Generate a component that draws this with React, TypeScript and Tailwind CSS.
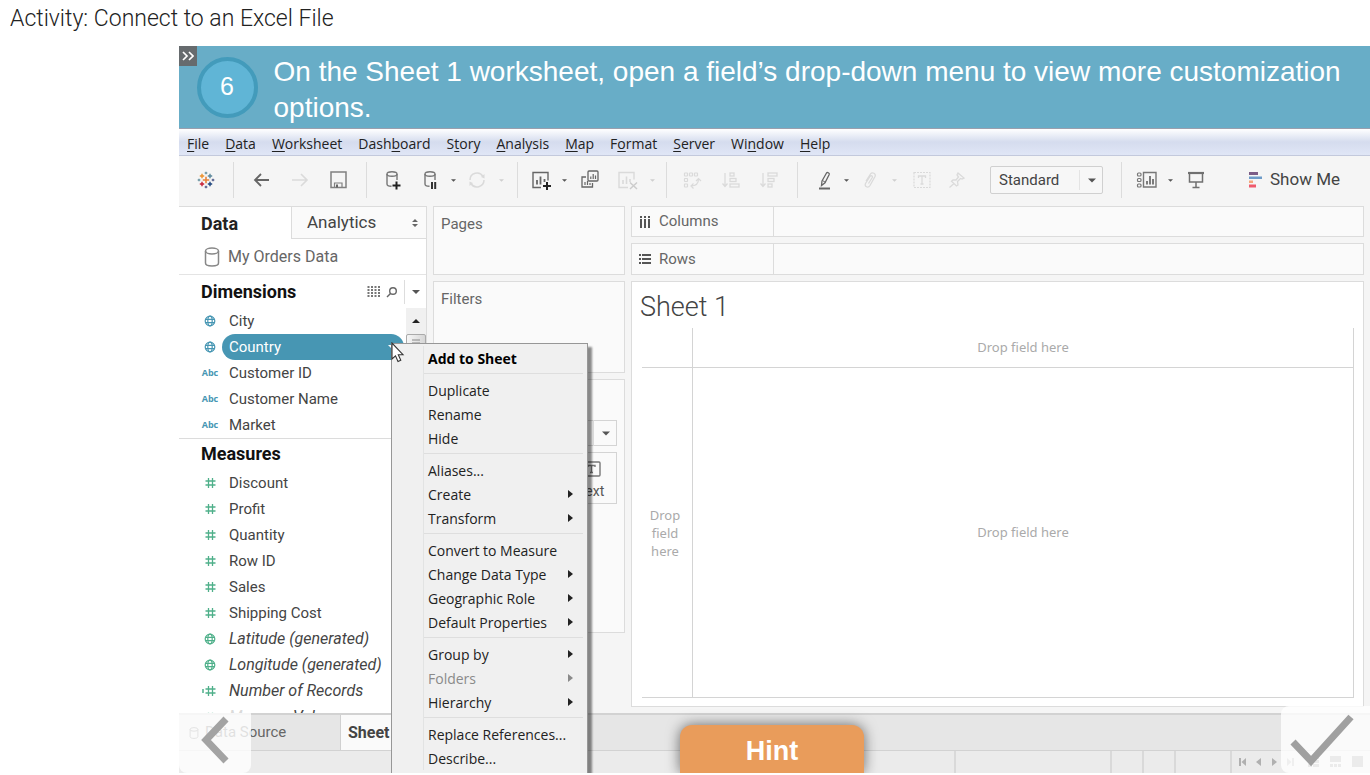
import React from "react";

type IconName =
  | "logo" | "back" | "forward" | "save" | "dbPlus" | "dbPause" | "refresh" | "chartPlus"
  | "duplicate" | "clear" | "swap" | "sortAsc" | "sortDesc" | "pen" | "clip" | "label" | "pin"
  | "cards" | "present";

const DARK = "#666";
const PALE = "#dadada";

function Plus({ x, y, s, c }: { x: number; y: number; s: number; c: string }) {
  return <path d={`M${x - s} ${y}H${x + s}M${x} ${y - s}V${y + s}`} stroke={c} strokeWidth={s > 2.5 ? 1.6 : 1.4} />;
}

const drawings: Record<IconName, React.ReactNode> = {
  logo: (
    <g>
      <Plus x={13} y={12} s={3.2} c="#e8833a" />
      <Plus x={9} y={8} s={2.2} c="#eb912c" />
      <Plus x={17} y={8} s={2.2} c="#5b879b" />
      <Plus x={9} y={16} s={2.2} c="#c72035" />
      <Plus x={17} y={16} s={2.2} c="#1f457e" />
      <Plus x={13} y={5} s={1.3} c="#7199a6" />
      <Plus x={13} y={19} s={1.3} c="#5b6591" />
      <Plus x={6} y={12} s={1.3} c="#7199a6" />
      <Plus x={20} y={12} s={1.3} c="#5b6591" />
    </g>
  ),
  back: <path d="M19 12H5M11 6L5 12L11 18" stroke={DARK} strokeWidth="1.8" />,
  forward: <path d="M4 12H18.500M13 6L19 12L13 18" stroke={PALE} strokeWidth="1.6" />,
  save: (
    <g>
      <path d="M5 4H20V19.500H5Z" stroke="#808080" strokeWidth="1.5" />
      <path d="M8.500 19V15H16V19" stroke="#808080" strokeWidth="1.2" />
      <path d="M10 16.500H12V19.500H10Z" fill={DARK} />
    </g>
  ),
  dbPlus: (
    <g>
      <ellipse cx="11" cy="6" rx="5" ry="2.200" stroke="#777" strokeWidth="1.400" />
      <path d="M6 6V16C6 17.500 8 18.300 10.500 18.300M16 6V12" stroke="#777" strokeWidth="1.400" />
      <path d="M11.500 17.500H19.500M15.500 13.500V21.500" stroke="#222" strokeWidth="2" />
    </g>
  ),
  dbPause: (
    <g>
      <ellipse cx="11" cy="6" rx="5" ry="2.200" stroke="#777" strokeWidth="1.400" />
      <path d="M6 6V16C6 17.500 8 18.300 10.500 18.300M16 6V12" stroke="#777" strokeWidth="1.400" />
      <path d="M13 14V21M16.200 14V21" stroke="#333" strokeWidth="2" />
    </g>
  ),
  refresh: (
    <g>
      <path d="M5 12A7 7 0 0 1 18 8.500M19 12A7 7 0 0 1 6 15.500" stroke={PALE} strokeWidth="1.500" />
      <path d="M16 9L19.500 6V10.500ZM8 15L4.500 18V13.500Z" fill={PALE} />
    </g>
  ),
  chartPlus: (
    <g>
      <path d="M11 19.500H3V4.500H18V12.500" stroke={DARK} strokeWidth="1.400" />
      <path d="M7 16.500V12M10.500 16.500V8.500M14.500 14V11" stroke={DARK} strokeWidth="1.800" />
      <path d="M13 18H21M17 14V22" stroke="#222" strokeWidth="2" />
    </g>
  ),
  duplicate: (
    <g>
      <rect x="10" y="3" width="10" height="10" rx="1" stroke={DARK} strokeWidth="1.300" />
      <path d="M12.800 11V8.500M15.200 11V6M17.500 11V7.500" stroke={DARK} strokeWidth="1.200" />
      <path d="M8 9H4V19H14.500V15" stroke={DARK} strokeWidth="1.300" />
      <path d="M7 17V14M9.500 17V13M12 17V15" stroke={DARK} strokeWidth="1.200" />
    </g>
  ),
  clear: (
    <g>
      <path d="M12 19.500H3V4.500H18V11.500" stroke={PALE} strokeWidth="1.400" />
      <path d="M7 16V12M10.500 16V8.500M14 14V11" stroke={PALE} strokeWidth="1.600" />
      <path d="M14 14.500L21 21M21 14.500L14 21" stroke="#ccc" strokeWidth="1.500" />
    </g>
  ),
  swap: (
    <g stroke={PALE} strokeWidth="1.200">
      <rect x="3.500" y="5" width="3" height="3" rx="0.500" /><rect x="8.500" y="5" width="3" height="3" rx="0.500" /><rect x="13.500" y="5" width="3" height="3" rx="0.500" />
      <rect x="3.500" y="10.500" width="3" height="3" rx="0.500" /><rect x="3.500" y="16" width="3" height="3" rx="0.500" />
      <path d="M17.500 11C17.500 15 15 18 10 18M15 13L17.500 10.500L20 13M12.500 15.500L10 18L12.500 20.500" />
    </g>
  ),
  sortAsc: (
    <g stroke={PALE} strokeWidth="1.300">
      <path d="M6 5V18M3.500 15.500L6 18.500L8.500 15.500" />
      <rect x="11" y="5" width="4" height="3" /><rect x="11" y="10.500" width="6" height="3" /><rect x="11" y="16" width="9" height="3" />
    </g>
  ),
  sortDesc: (
    <g stroke={PALE} strokeWidth="1.300">
      <path d="M6 5V18M3.500 15.500L6 18.500L8.500 15.500" />
      <rect x="11" y="5" width="9" height="3" /><rect x="11" y="10.500" width="6" height="3" /><rect x="11" y="16" width="4" height="3" />
    </g>
  ),
  pen: (
    <g>
      <path d="M10 13L14.500 5C15.200 3.800 17.800 5 17.200 6.500L13 14.800L9.500 17.500Z" stroke={DARK} strokeWidth="1.300" />
      <path d="M10.500 12.500L13.200 14.200" stroke={DARK} />
      <path d="M7 20.500H18" stroke={DARK} strokeWidth="2" />
    </g>
  ),
  clip: <path d="M8 13L12.500 6C14 3.600 18.500 5.500 17 8.500L12 17.500C10 20.500 6 18.500 7.500 15.500L12 8.500C13 7 15 8 14.300 9.500L10.500 15.500" stroke={PALE} strokeWidth="1.300" />,
  label: (
    <g>
      <rect x="4" y="4.500" width="16" height="15" stroke={PALE} strokeDasharray="2 1" strokeWidth="1.200" />
      <path d="M8.500 10V8H15.500V10M12 8V16M10.500 16H13.500" stroke={PALE} strokeWidth="1.300" />
    </g>
  ),
  pin: <path d="M14 5L20 10L18 11L16.500 10.500L13.500 13.500L14 17L12.500 18L7.500 13.300L9 12L12 12L14.500 9L13 7ZM10 15.500L5.500 19.500" stroke={PALE} strokeWidth="1.300" />,
  cards: (
    <g>
      <g stroke="#777" strokeWidth="1.200">
        <rect x="1.500" y="5" width="3.500" height="3" rx="1" /><rect x="1.500" y="10.500" width="3.500" height="3" rx="1" /><rect x="1.500" y="16" width="3.500" height="3" rx="1" />
        <path d="M7.500 4.500H20V19H7.500Z" strokeWidth="1.400" />
      </g>
      <path d="M11 16.500V13M14 16.500V8M17 16.500V11" stroke={DARK} strokeWidth="1.700" />
    </g>
  ),
  present: (
    <g stroke="#707070" strokeWidth="1.500">
      <path d="M4 5H20" strokeWidth="2.200" />
      <path d="M5.500 5.500V14H18.500V5.500M12 14V19M8.500 19.500H15.500" />
    </g>
  ),
};

type Tool =
  | { kind: "icon"; icon: IconName; label: string; ml: string }
  | { kind: "caret"; pale?: boolean; label: string; ml: string }
  | { kind: "sep"; ml: string };

const tools: Tool[] = [
  { kind: "icon", icon: "logo", label: "Start page", ml: "ml-3.5" },
  { kind: "sep", ml: "ml-4" },
  { kind: "icon", icon: "back", label: "Undo", ml: "ml-4" },
  { kind: "icon", icon: "forward", label: "Redo", ml: "ml-3.5" },
  { kind: "icon", icon: "save", label: "Save", ml: "ml-3.5" },
  { kind: "sep", ml: "ml-4" },
  { kind: "icon", icon: "dbPlus", label: "New data source", ml: "ml-3.5" },
  { kind: "icon", icon: "dbPause", label: "Pause updates", ml: "ml-3.5" },
  { kind: "caret", label: "Update options", ml: "ml-1" },
  { kind: "icon", icon: "refresh", label: "Refresh", ml: "ml-1.5" },
  { kind: "caret", pale: true, label: "Refresh options", ml: "ml-1.5" },
  { kind: "sep", ml: "ml-2.5" },
  { kind: "icon", icon: "chartPlus", label: "New worksheet", ml: "ml-3" },
  { kind: "caret", label: "New sheet options", ml: "ml-1" },
  { kind: "icon", icon: "duplicate", label: "Duplicate sheet", ml: "ml-2" },
  { kind: "icon", icon: "clear", label: "Clear sheet", ml: "ml-3.5" },
  { kind: "caret", pale: true, label: "Clear options", ml: "ml-1.5" },
  { kind: "sep", ml: "ml-2" },
  { kind: "icon", icon: "swap", label: "Swap rows and columns", ml: "ml-3.5" },
  { kind: "icon", icon: "sortAsc", label: "Sort ascending", ml: "ml-3.5" },
  { kind: "icon", icon: "sortDesc", label: "Sort descending", ml: "ml-3.5" },
  { kind: "sep", ml: "ml-4" },
  { kind: "icon", icon: "pen", label: "Highlight", ml: "ml-3.5" },
  { kind: "caret", label: "Highlight options", ml: "ml-1" },
  { kind: "icon", icon: "clip", label: "Group members", ml: "ml-1.5" },
  { kind: "caret", pale: true, label: "Group options", ml: "ml-1.5" },
  { kind: "icon", icon: "label", label: "Show mark labels", ml: "ml-2.5" },
  { kind: "icon", icon: "pin", label: "Fix axes", ml: "ml-2.5" },
];

const viewTools: Tool[] = [
  { kind: "sep", ml: "ml-4.5" },
  { kind: "icon", icon: "cards", label: "Show or hide cards", ml: "ml-3.5" },
  { kind: "caret", label: "Card options", ml: "ml-1" },
  { kind: "icon", icon: "present", label: "Presentation mode", ml: "ml-2" },
];

function Caret({ className }: { className: string }) {
  return (
    <svg viewBox="0 0 10 5" className={className} aria-hidden="true">
      <path d="M0 0H10L5 5Z" fill="currentColor" />
    </svg>
  );
}

function ToolItem({ tool }: { tool: Tool }) {
  if (tool.kind === "sep") return <span className={`${tool.ml} h-9 w-px shrink-0 bg-[#dcdcdc]`} />;
  if (tool.kind === "caret")
    return (
      <button type="button" aria-label={tool.label} className={`${tool.ml} flex h-6 w-3 shrink-0 items-center justify-center`}>
        <Caret className={tool.pale ? "h-[3px] w-[5px] text-[#cfcfcf]" : "h-[3px] w-[5px] text-[#555]"} />
      </button>
    );
  return (
    <button type="button" aria-label={tool.label} className={`${tool.ml} size-6 shrink-0`}>
      <svg viewBox="0 0 24 24" fill="none" className="size-6" aria-hidden="true">{drawings[tool.icon]}</svg>
    </button>
  );
}

const menuBar: [string, string, string][] = [
  ["", "F", "ile"], ["", "D", "ata"], ["", "W", "orksheet"], ["Dash", "b", "oard"], ["S", "t", "ory"],
  ["", "A", "nalysis"], ["", "M", "ap"], ["F", "o", "rmat"], ["", "S", "erver"], ["Wi", "n", "dow"], ["", "H", "elp"],
];

type FieldKind = "globe" | "abc" | "number" | "calc";

function FieldIcon({ kind, color }: { kind: FieldKind; color: string }) {
  if (kind === "abc") return <span className={`w-5 text-center font-['Open_Sans',sans-serif] text-[9px] font-bold ${color}`}>Abc</span>;
  if (kind === "globe")
    return (
      <svg viewBox="0 0 20 20" fill="none" stroke="currentColor" strokeWidth="1.200" className={`size-5 ${color}`} aria-hidden="true">
        <circle cx="10" cy="10" r="4.800" />
        <ellipse cx="10" cy="10" rx="2.200" ry="4.800" />
        <path d="M5.500 8.300H14.500M5.500 11.700H14.500" />
      </svg>
    );
  return (
    <svg viewBox="0 0 20 20" fill="none" stroke="currentColor" strokeWidth="1.300" className={`size-5 ${color}`} aria-hidden="true">
      <path d="M8.500 5V15M12.500 5V15M5.500 8H15.500M5.500 12H15.500" />
      {kind === "calc" && <path d="M2 9H4M2 11H4" />}
    </svg>
  );
}

const dimensions: [FieldKind, string][] = [
  ["globe", "City"], ["globe", "Country"], ["abc", "Customer ID"], ["abc", "Customer Name"], ["abc", "Market"],
];

const measures: [FieldKind, string, boolean][] = [
  ["number", "Discount", false], ["number", "Profit", false], ["number", "Quantity", false], ["number", "Row ID", false],
  ["number", "Sales", false], ["number", "Shipping Cost", false], ["globe", "Latitude (generated)", true],
  ["globe", "Longitude (generated)", true], ["calc", "Number of Records", true], ["number", "Measure Values", true],
];

const contextMenu: { label: string; sub?: boolean; off?: boolean; bold?: boolean }[][] = [
  [{ label: "Add to Sheet", bold: true }],
  [{ label: "Duplicate" }, { label: "Rename" }, { label: "Hide" }],
  [{ label: "Aliases..." }, { label: "Create", sub: true }, { label: "Transform", sub: true }],
  [{ label: "Convert to Measure" }, { label: "Change Data Type", sub: true }, { label: "Geographic Role", sub: true }, { label: "Default Properties", sub: true }],
  [{ label: "Group by", sub: true }, { label: "Folders", sub: true, off: true }, { label: "Hierarchy", sub: true }],
  [{ label: "Replace References..." }, { label: "Describe..." }],
];

function Cylinder({ className }: { className: string }) {
  return (
    <svg viewBox="0 0 16 20" fill="none" stroke="currentColor" strokeWidth="1.500" className={className} aria-hidden="true">
      <ellipse cx="8" cy="4" rx="6.500" ry="3" />
      <path d="M1.500 4V16C1.500 20 14.500 20 14.500 16V4" />
    </svg>
  );
}

function DataPane() {
  return (
    <aside className="flex w-62 shrink-0 flex-col overflow-hidden border-t border-r border-[#dcdcdc] bg-white">
      <div className="flex h-8 shrink-0 text-[17px]">
        <button type="button" className="w-28 pl-[22px] text-left text-[18px] font-bold text-[#222]">Data</button>
        <button type="button" className="flex flex-1 items-center justify-between border-b border-l border-[#dcdcdc] bg-[#fafafa] pr-2 pl-[15px] text-[#444]">
          Analytics
          <svg viewBox="0 0 6 8" className="h-2 w-1.5" aria-hidden="true"><path d="M0 3L3 0L6 3ZM0 5H6L3 8Z" fill="#666" /></svg>
        </button>
      </div>
      <div className="flex h-9 shrink-0 items-center border-b border-[#e4e4e4] pl-[25px] text-[16px] text-[#666]">
        <Cylinder className="mr-2 h-5 w-4 text-[#888]" />
        My Orders Data
      </div>
      <div className="flex h-[33px] shrink-0 items-center pl-[22px]">
        <h2 className="flex-1 text-[18px] font-bold text-[#111]">Dimensions</h2>
        <button type="button" aria-label="View data" className="mr-1.5">
          <svg viewBox="0 0 13 11" className="h-[11px] w-[13px]" fill="none" stroke="#777" strokeWidth="2" strokeDasharray="2 1" aria-hidden="true">
            <path d="M1.500 0V11M5 0V11M8.500 0V11M12 0V11" />
          </svg>
        </button>
        <button type="button" aria-label="Find field" className="mr-1.5">
          <svg viewBox="0 0 12 12" className="size-3" fill="none" stroke="#666" strokeWidth="1.400" aria-hidden="true">
            <circle cx="7" cy="5" r="3.300" /><path d="M4.500 7.500L1 11" />
          </svg>
        </button>
        <button type="button" aria-label="Pane options" className="flex h-6 w-5.5 items-center justify-center border-l border-[#ddd]">
          <Caret className="h-1 w-2 text-[#555]" />
        </button>
      </div>
      <div className="flex shrink-0 border-b border-[#dcdcdc]">
        <ul className="flex-1">
          {dimensions.map(([kind, name]) => (
            <li key={name} className="flex h-6.5 items-center pl-[21px] text-[15px]">
              <FieldIcon kind={kind} color="text-[#4796b3]" />
              {name === "Country" ? (
                <button type="button" className="ml-0.5 flex h-6.5 flex-1 items-center justify-between rounded-full bg-[#4796b3] pr-2 pl-[7px] text-white">
                  {name}
                  <Caret className="h-1 w-2 text-white" />
                </button>
              ) : (
                <span className="pl-[9px] text-[#444]">{name}</span>
              )}
            </li>
          ))}
        </ul>
        <div className="ml-0.5 w-5 bg-[#f0f0f0]">
          <div className="flex h-6.5 items-center justify-center">
            <Caret className="h-1 w-2 rotate-180 text-[#222]" />
          </div>
          <div className="flex h-16 justify-center rounded-xs border border-[#aaa] bg-linear-to-r from-[#f6f6f6] to-[#d6d6d6] pt-1">
            <svg viewBox="0 0 8 6" className="h-1.5 w-2" aria-hidden="true"><path d="M0 1H8M0 4H8" stroke="#888" /></svg>
          </div>
        </div>
      </div>
      <h2 className="h-[31px] shrink-0 pl-[22px] text-[18px] leading-[29px] font-bold text-[#111]">Measures</h2>
      <ul>
        {measures.map(([kind, name, italic]) => (
          <li key={name} className="flex h-6.5 items-center pl-[21px] text-[15px] text-[#444]">
            <FieldIcon kind={kind} color="text-[#4fb08a]" />
            <span className={italic ? "pl-[9px] text-[16px] italic" : "pl-[9px]"}>{name}</span>
          </li>
        ))}
      </ul>
    </aside>
  );
}

function CardsColumn() {
  return (
    <section className="flex w-48 shrink-0 flex-col gap-1.5 text-[15px] text-[#666]">
      <div className="h-[69px] border border-[#dcdcdc] bg-[#fafafa] px-[7px] py-1.5">Pages</div>
      <div className="h-23 border border-[#dcdcdc] bg-[#fafafa] px-[7px] py-1.5">Filters</div>
      <div className="flex h-63.5 flex-col items-end gap-1.5 border border-[#dcdcdc] bg-[#fafafa] px-[7px] pt-10">
        <label className="relative block w-full">
          <select aria-label="Mark type" className="block h-6.5 w-full appearance-none border border-[#d4d4d4] bg-[#fafafa]" />
          <span className="pointer-events-none absolute inset-y-0 right-0 flex w-6 items-center justify-center border-l border-[#e0e0e0]">
            <Caret className="h-[5px] w-2 text-[#555]" />
          </span>
        </label>
        <button type="button" className="flex h-13 w-14 flex-col items-center justify-center gap-1 border border-[#d4d4d4] pt-1.5 pl-1 text-[14px] leading-5 text-[#555]">
          <svg viewBox="0 0 20 16" fill="none" stroke="#777" strokeWidth="1.400" className="h-4 w-5" aria-hidden="true">
            <rect x="1" y="1" width="18" height="14" rx="1" />
            <path d="M7 6V4.500H14V6M10.500 4.500V11.500M9 11.500H12" />
          </svg>
          Text
        </button>
      </div>
    </section>
  );
}

function Viz() {
  return (
    <section className="flex min-w-0 flex-1 flex-col gap-1.5">
      <div className="flex h-[31px] shrink-0 border border-[#dcdcdc] bg-[#fafafa] text-[15px] text-[#666]">
        <div className="flex w-35.5 items-center gap-2 border-r border-[#dcdcdc] pl-[7px]">
          <svg viewBox="0 0 12 12" className="size-3" stroke="#555" strokeWidth="2" aria-hidden="true">
            <path d="M2 0V2M2 3V12M6 0V2M6 3V12M10 0V2M10 3V12" />
          </svg>
          Columns
        </div>
      </div>
      <div className="flex h-8 shrink-0 border border-[#dcdcdc] bg-[#fafafa] text-[15px] text-[#666]">
        <div className="flex w-35.5 items-center gap-2 border-r border-[#dcdcdc] pl-[7px]">
          <svg viewBox="0 0 12 12" className="size-3" stroke="#555" strokeWidth="2" aria-hidden="true">
            <path d="M0 2H2M3 2H12M0 6H2M3 6H12M0 10H2M3 10H12" />
          </svg>
          Rows
        </div>
      </div>
      <div className="flex flex-1 flex-col border border-[#dcdcdc] bg-white pr-[9px] pb-2 pl-2">
        <h1 className="h-11.5 shrink-0 text-[27px] leading-[50px] font-light text-[#444]">Sheet 1</h1>
        <div className="ml-0.5 grid flex-1 grid-cols-[51px_1fr] grid-rows-[40px_1fr] border-r border-b border-[#d4d4d4] font-['Noto_Sans',sans-serif] text-[13px] text-[#aaa]">
          <div className="border-r border-b border-[#d4d4d4]" />
          <div className="flex items-center justify-center border-b border-[#d4d4d4]">Drop field here</div>
          <div className="flex items-center justify-center border-r border-[#d4d4d4] pr-1 text-center leading-[18px]">
            Drop<br />field<br />here
          </div>
          <div className="flex items-center justify-center">Drop field here</div>
        </div>
      </div>
    </section>
  );
}

function ContextMenu() {
  return (
    <div role="menu" className="absolute top-[297px] bottom-0 left-53 w-[197px] overflow-hidden border border-b-0 border-[#979797] bg-[#f0f0f0] pt-0.5 pl-[31px] font-['Open_Sans',sans-serif] text-[14px] text-[#222] shadow-[4px_4px_2px_rgba(0,0,0,0.45)]">
      <div className="border-l border-[#e2e3e3] pr-1">
        {contextMenu.map((group, i) => (
          <div key={i} className={i > 0 ? "mt-[3px] border-t border-[#dedede] pt-1" : ""}>
            {group.map((item) => (
              <button
                key={item.label}
                type="button"
                role="menuitem"
                disabled={item.off}
                className={`flex h-6 w-full items-center justify-between pr-2.5 pl-1 whitespace-nowrap ${item.bold ? "font-bold text-black" : ""} ${item.off ? "text-[#8a8a8a]" : ""}`}
              >
                {item.label}
                {item.sub && (
                  <svg viewBox="0 0 5 8" className="h-2 w-[5px]" aria-hidden="true"><path d="M0 0L5 4L0 8Z" fill="currentColor" /></svg>
                )}
              </button>
            ))}
          </div>
        ))}
      </div>
    </div>
  );
}

export default function App() {
  return (
    <div className="flex h-screen flex-col overflow-hidden bg-white pb-0.5 font-[Roboto,sans-serif]">
      <header className="h-11.5 shrink-0 pl-2.5 text-[23px] leading-[38px] font-light text-[#222]">Activity: Connect to an Excel File</header>

      <main className="relative ml-[179px] flex min-h-0 flex-1 flex-col overflow-hidden">
        <div className="flex min-h-20.5 shrink-0 items-center bg-[#68adc7]">
          <button type="button" aria-label="Collapse" className="flex h-5 w-[19px] items-center justify-center self-start bg-[#666b6e]">
            <svg viewBox="0 0 12 10" fill="none" stroke="#fff" strokeWidth="1.700" className="h-2.5 w-3" aria-hidden="true">
              <path d="M1 1L5 5L1 9M7 1L11 5L7 9" />
            </svg>
          </button>
          <span className="flex size-[61px] shrink-0 items-center justify-center rounded-full border-4 border-[#439bbb] bg-[#60b5d6] font-['Liberation_Sans',sans-serif] text-[25px] text-white">6</span>
          <p className="pt-1.5 pr-4 pl-4 font-['Liberation_Sans',sans-serif] text-[28px] leading-9 text-white">
            On the Sheet 1 worksheet, open a field’s drop-down menu to view more customization options.
          </p>
        </div>

        <nav className="flex h-7 shrink-0 items-center gap-4 border-t border-b border-t-[#9a9fae] border-b-[#c3c9dc] bg-linear-to-b from-white via-[#d5dcee] to-[#e0e6f6] pt-0.5 pl-2 font-['Open_Sans',sans-serif] text-[14px] text-[#222]">
          {menuBar.map(([before, key, after]) => (
            <button key={before + key + after} type="button">
              {before}<u className="underline-offset-2">{key}</u>{after}
            </button>
          ))}
        </nav>

        <div className="flex h-12.5 shrink-0 items-center bg-[#f5f5f5] pb-0.5">
          {tools.map((tool, i) => <ToolItem key={i} tool={tool} />)}
          <label className="relative ml-5.5 block w-[113px] shrink-0">
            <select aria-label="Fit" className="block h-7 w-full appearance-none rounded-xs border border-[#d0d0d0] bg-[#f7f7f7] pl-2 text-[15px] text-[#444]">
              <option>Standard</option>
            </select>
            <span className="pointer-events-none absolute inset-y-1 right-0 flex w-6 items-center justify-center border-l border-[#e4e4e4]">
              <Caret className="h-[5px] w-2 text-[#555]" />
            </span>
          </label>
          {viewTools.map((tool, i) => <ToolItem key={i} tool={tool} />)}
          <button type="button" className="ml-10 flex shrink-0 items-center gap-2 text-[17px] text-[#444]">
            <svg viewBox="0 0 14 16" className="h-4 w-3.5" aria-hidden="true">
              <path d="M1 0H10V3H1Z" fill="#7b5c86" /><path d="M1 4.500H14V7H1Z" fill="#6d9bc8" />
              <path d="M1 8.500H5V11H1Z" fill="#f4a77b" /><path d="M1 12.500H8V15.500H1Z" fill="#ef5a6c" />
            </svg>
            Show Me
          </button>
        </div>

        <div className="flex min-h-0 flex-1 gap-1.5 bg-[#f5f5f5] pr-1.5">
          <DataPane />
          <CardsColumn />
          <div className="flex min-w-0 flex-1 pb-1.5"><Viz /></div>
        </div>

        <footer className="shrink-0">
          <div className="flex h-9.5 border-t-2 border-b border-[#d2d2d2] bg-[#e6e6e6] text-[15px] text-[#666]">
            <button type="button" className="flex w-40.5 items-center gap-1.5 border-r border-[#d0d0d0] pl-2.5">
              <Cylinder className="h-3 w-2.5" />Data Source
            </button>
            <button type="button" className="w-18 bg-[#fafafa] pl-[7px] text-left text-[16px] font-bold whitespace-nowrap text-[#444]">Sheet 1</button>
          </div>
          <div className="flex h-5.5 items-center justify-end bg-[#ebebeb] text-[#b0b0b0]">
            <div className="h-full w-39 border-l-2 border-[#d9d9d9]" />
            <div className="h-full w-8 border-l-2 border-[#d9d9d9]" />
            <div className="h-full w-8 border-l-2 border-[#d9d9d9]" />
            <div className="h-full w-14 border-l-2 border-[#d9d9d9]" />
            <div className="flex h-full w-35 items-center justify-between border-l-2 border-[#d9d9d9] px-1.5">
              <svg viewBox="0 0 56 8" className="h-2 w-14" fill="#b0b0b0" aria-hidden="true">
                <path d="M1 0H3V8H1ZM8 0V8L3.500 4ZM23 0V8L18 4ZM34 0V8L39 4ZM49 0V8L53.500 4ZM54 0H56V8H54Z" />
              </svg>
              <svg viewBox="0 0 56 12" className="h-3 w-14" fill="#999" aria-hidden="true">
                <path d="M0 0H4V3H0ZM5 0H11V3H5ZM0 4H4V7H0ZM5 4H11V7H5ZM0 8H4V11H0ZM5 8H11V11H5ZM22 0H33V6H22ZM22 8H25V11H22ZM26 8H29V11H26ZM30 8H33V11H30ZM44 0H55V11H44Z" />
              </svg>
            </div>
          </div>
        </footer>

        <ContextMenu />

        <svg viewBox="0 0 14 22" className="absolute top-[296px] left-53 h-5.5 w-3.5" aria-hidden="true">
          <path d="M1 1V17L4.500 13.800L7 19.500L9.800 18.200L7.300 12.700H12Z" fill="#fff" stroke="#333" strokeWidth="1.100" />
        </svg>

        <button type="button" aria-label="Previous step" className="absolute bottom-0 left-0 flex h-[67px] w-18 items-center justify-center rounded-lg bg-white/80">
          <svg viewBox="0 0 30 48" fill="none" stroke="#a3a3a3" strokeWidth="7" className="h-12 w-[30px]" aria-hidden="true">
            <path d="M26 3L6 24L26 45" />
          </svg>
        </button>
        <button type="button" className="absolute bottom-0 left-[501px] h-12 w-46 rounded-t-xl bg-[#e99c5b] pt-1 font-['Liberation_Sans',sans-serif] text-[27px] font-bold text-white shadow-[0_0_14px_rgba(0,0,0,0.55)]">
          Hint
        </button>
        <button type="button" aria-label="Check step" className="absolute right-0 bottom-0 flex h-[67px] w-[89px] items-center justify-center rounded-l-lg bg-white/80">
          <svg viewBox="0 0 66 54" fill="none" stroke="#a0a0a0" strokeWidth="7" className="mr-2 h-[54px] w-[66px]" aria-hidden="true">
            <path d="M4 29L22 48L62 4" />
          </svg>
        </button>
      </main>
    </div>
  );
}
